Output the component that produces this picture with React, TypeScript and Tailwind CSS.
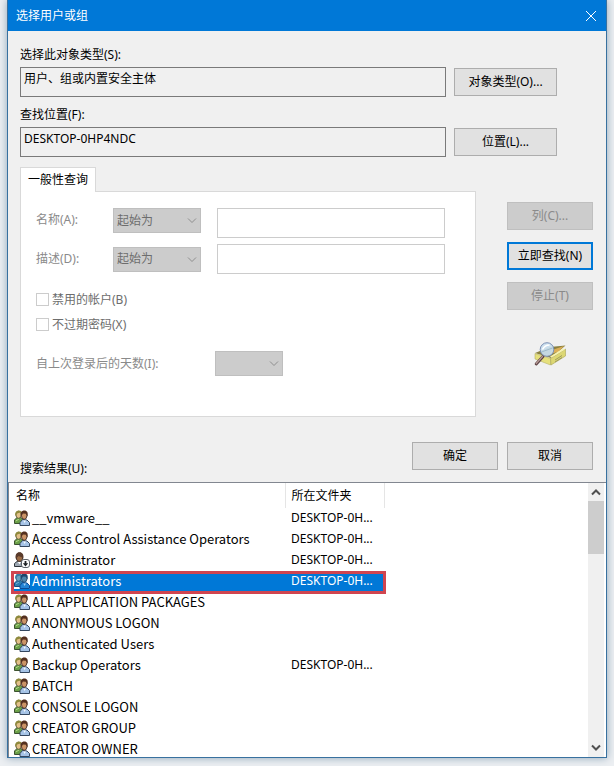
import { useId, type ReactNode } from "react";
import clsx from "clsx";

type Entry = { name: string; folder?: string; kind?: "user"; selected?: boolean };

const FOLDER = "DESKTOP-0H...";

const entries: Entry[] = [
  { name: "__vmware__", folder: FOLDER },
  { name: "Access Control Assistance Operators", folder: FOLDER },
  { name: "Administrator", folder: FOLDER, kind: "user" },
  { name: "Administrators", folder: FOLDER, selected: true },
  { name: "ALL APPLICATION PACKAGES" },
  { name: "ANONYMOUS LOGON" },
  { name: "Authenticated Users" },
  { name: "Backup Operators", folder: FOLDER },
  { name: "BATCH" },
  { name: "CONSOLE LOGON" },
  { name: "CREATOR GROUP" },
  { name: "CREATOR OWNER" },
];

function GroupIcon({ selected }: { selected?: boolean }) {
  return (
    <svg viewBox="0 0 16 16" className={clsx("size-4 shrink-0", selected && "bg-white")} aria-hidden="true">
      <path d="M0.5 13.500V10L3 7.500h4l2 2v4z" fill={selected ? "#2f7dae" : "#6a9f48"} stroke={selected ? "#164a80" : "#3c5230"} />
      <path d="M1.800 11l3.200-2" stroke={selected ? "#6fb0d8" : "#b5d888"} />
      <ellipse cx="4.600" cy="4.800" rx="2.700" ry="3.500" fill={selected ? "#6da3bf" : "#e2c088"} stroke={selected ? "#1f5277" : "#4c4830"} strokeWidth=".8" />
      <path d="M1.300 6C.6 2.500 2.300.4 5 .4c1.600 0 2.500.8 2.800 2L5.400 2.800 3.200 3.600z" fill={selected ? "#3a7ca3" : "#8f8a3c"} />
      <path d="M6 15.500V12.500l2.500-3 4.500.5 2.500 2.500v3H6z" fill={selected ? "#2584d4" : "#a5c3e6"} stroke={selected ? "#0f4a93" : "#34475f"} />
      <path d="M9.300 10.500l1.200 2.500 1.600-2.500z" fill={selected ? "#9fcdf3" : "#f2f7fd"} />
      <ellipse cx="10.200" cy="5.600" rx="2.700" ry="3.700" fill={selected ? "#4f86ab" : "#cc9466"} stroke={selected ? "#173f66" : "#35211a"} strokeWidth=".8" />
      <path d="M6.900 6.400C6 2.400 7.600.4 10.300.4c2.900 0 4.100 2.200 3.200 6.400l-1.400-3-3.400-.2z" fill={selected ? "#1b466e" : "#54301f"} />
    </svg>
  );
}

function DisabledUserIcon() {
  return (
    <svg viewBox="0 0 16 16" className="size-4 shrink-0" aria-hidden="true">
      <path d="M0.500 14.500V11.500L3 9.500h5l2 2v3z" fill="#9ea8b3" stroke="#2f353b" />
      <path d="M3.500 9.500l2 2.800 1.800-2.800z" fill="#fff" />
      <ellipse cx="5.500" cy="5.200" rx="3.200" ry="4.200" fill="#9a6a44" stroke="#33211a" strokeWidth=".9" />
      <path d="M1.800 6.800C1 2.600 2.600.3 5.500.3s4.600 2.300 3.700 6.500L7.600 5.200 4.600 4z" fill="#5a3b2b" />
      <rect x="7.500" y="7.500" width="8" height="8" rx="2.500" fill="#fff" stroke="#5c6167" />
      <path d="M11.500 9v3" stroke="#1f2225" strokeWidth="1.800" />
      <path d="M8.800 11.200h5.400l-2.700 3.200z" fill="#1f2225" />
    </svg>
  );
}

function SearchBoxIcon() {
  return (
    <svg viewBox="0 0 32 26" className="h-[26px] w-8" role="img" aria-label="查找">
      <path d="M1 11L16 5l15.500-1.500L17 16z" fill="#8a8040" />
      <path d="M18 8l12-4-6 6-8 2z" fill="#dcae55" />
      <path d="M1 11.500l15.500 5V23L1 17z" fill="#e6e07c" stroke="#b5b065" strokeWidth=".6" />
      <path d="M16.500 16.500L31.500 7v7L17 23z" fill="#dcd773" stroke="#aaa458" strokeWidth=".6" />
      <path d="M17.500 15.500l13.500-8-2-1-13 8z" fill="#f7f3ae" />
      <path d="M21 18l7-4.500M21 20l7-4.500" stroke="#8f8d55" strokeWidth=".8" />
      <path d="M9 14.500L2.200 22" stroke="#5e4345" strokeWidth="3" strokeLinecap="round" />
      <path d="M8.500 14.500L2.200 21.500" stroke="#b79a95" strokeWidth="1.200" strokeLinecap="round" />
      <circle cx="13" cy="7.500" r="6.800" fill="#c9dfee" fillOpacity=".93" stroke="#7c90b4" />
      <path d="M8.500 7.500C10 4.500 12 3 15.500 3" fill="none" stroke="#fff" strokeWidth="1.600" />
      <path d="M7.500 10l11-4" stroke="#93b2c6" strokeWidth=".8" />
    </svg>
  );
}

function Chevron({ up, className }: { up?: boolean; className?: string }) {
  return (
    <svg viewBox="0 0 10 10" className={clsx("size-[10px]", className)} fill="none" stroke="currentColor" aria-hidden="true">
      <path d={up ? "M1 7.500L5 3.500 9 7.500" : "M1 2.500L5 6.500 9 2.500"} />
    </svg>
  );
}

function PushButton({ children, className, disabled }: { children: ReactNode; className?: string; disabled?: boolean }) {
  return (
    <button
      type="button"
      disabled={disabled}
      className={clsx(
        "h-7 shrink-0 border text-center",
        disabled ? "border-[#bfbfbf] bg-[#cccccc] text-[#8a8a8a]" : "border-[#adadad] bg-[#e1e1e1]",
        className,
      )}
    >
      {children}
    </button>
  );
}

function LocationRow({ label, value, button }: { label: string; value: string; button: string }) {
  const id = useId();
  return (
    <div>
      <label htmlFor={id} className="block h-5 leading-4">{label}</label>
      <div className="flex items-center gap-2 pr-9">
        <input id={id} readOnly value={value} className="h-[30px] min-w-0 flex-1 border border-[#7a7a7a] bg-[#f0f0f0] px-[3px] pb-2 outline-none" />
        <PushButton className="w-[103px]">{button}</PushButton>
      </div>
    </div>
  );
}

function DropDown({ id, label, value, className }: { id?: string; label?: string; value: string; className: string }) {
  return (
    <div className={clsx("relative h-[25px] shrink-0", className)}>
      <select id={id} aria-label={label} disabled className="h-full w-full appearance-none border border-[#bfbfbf] bg-[#cccccc] pl-[3px] text-[#6d6d6d] opacity-100">
        <option>{value}</option>
      </select>
      <Chevron className="pointer-events-none absolute top-2 right-1 text-[#8f8f8f]" />
    </div>
  );
}

function QueryRow({ label, top }: { label: string; top?: boolean }) {
  const id = useId();
  return (
    <div className={clsx("flex", top ? "items-start" : "items-center")}>
      <label htmlFor={id} className="w-[77px] shrink-0 leading-6 text-[#8a8a8a]">{label}</label>
      <DropDown label={label} value="起始为" className="w-[88px]" />
      <input id={id} disabled className="ml-4 h-[30px] min-w-0 flex-1 border border-[#cccccc] bg-white" />
    </div>
  );
}

function Check({ label }: { label: string }) {
  return (
    <label className="flex h-[25px] items-center gap-[3px] text-[#6d6d6d]">
      <input type="checkbox" disabled className="size-[13px] appearance-none border border-[#cccccc] bg-white" />
      {label}
    </label>
  );
}

export default function App() {
  const daysId = useId();
  return (
    <div className="h-screen overflow-hidden bg-[#eceff2] px-[7px] pb-2 font-['Noto_Sans','Noto_Sans_CJK_SC',sans-serif] text-[12px] text-black">
      <main className="flex h-full flex-col border-x border-b border-[#38719f] bg-[#f0f0f0] shadow-[0_0_8px_#8da5b8]">
        <header className="flex h-[31px] shrink-0 items-center justify-between bg-[#0078d7] pr-[10px] pl-2 text-white">
          <h1>选择用户或组</h1>
          <button type="button" aria-label="关闭">
            <svg viewBox="0 0 10 10" className="size-[10px]" stroke="currentColor" aria-hidden="true">
              <path d="M0 0l10 10M10 0L0 10" />
            </svg>
          </button>
        </header>

        <div className="flex shrink-0 flex-col pt-4 pr-[13px] pl-3">
          <div className="flex flex-col gap-[10px]">
            <LocationRow label="选择此对象类型(S):" value="用户、组或内置安全主体" button="对象类型(O)..." />
            <LocationRow label="查找位置(F):" value="DESKTOP-0HP4NDC" button="位置(L)..." />
          </div>

          <div className="mt-[10px] flex items-start gap-[31px]">
            <section className="min-w-0 flex-1">
              <div role="tablist" className="flex">
                <button type="button" role="tab" aria-selected="true" className="relative z-10 -mb-px h-[25px] w-[76px] border border-b-0 border-[#d9d9d9] bg-white text-center">
                  一般性查询
                </button>
              </div>
              <div role="tabpanel" className="border border-[#d9d9d9] bg-white pt-4 pr-[30px] pb-10 pl-[15px]">
                <div className="flex flex-col gap-[6px]">
                  <QueryRow label="名称(A):" top />
                  <QueryRow label="描述(D):" />
                </div>
                <div className="mt-[13px]">
                  <Check label="禁用的帐户(B)" />
                  <Check label="不过期密码(X)" />
                </div>
                <div className="mt-[14px] flex items-center">
                  <label htmlFor={daysId} className="w-[179px] text-[#8a8a8a]">自上次登录后的天数(I):</label>
                  <DropDown id={daysId} value="" className="w-[68px]" />
                </div>
              </div>
            </section>
            <div className="flex w-[86px] shrink-0 flex-col gap-3 pt-[35px]">
              <PushButton disabled>列(C)...</PushButton>
              <button type="button" className="h-7 border-2 border-[#0078d7] bg-[#e1e1e1] text-center">立即查找(N)</button>
              <PushButton disabled>停止(T)</PushButton>
              <div className="mt-5 flex justify-center"><SearchBoxIcon /></div>
            </div>
          </div>

          <div className="mt-[25px] flex h-10 items-start justify-between">
            <h2 id="results" className="self-end pb-1">搜索结果(U):</h2>
            <div className="flex gap-[9px]">
              <PushButton className="w-[86px]">确定</PushButton>
              <PushButton className="w-[86px]">取消</PushButton>
            </div>
          </div>
        </div>

        <div className="flex min-h-0 flex-1 border-t border-l border-[#828790] bg-white pr-[2px]">
          <div className="min-w-0 flex-1 overflow-hidden">
            <table aria-labelledby="results" className="w-[376px] table-fixed border-collapse text-left">
              <thead>
                <tr className="h-[25px]">
                  <th className="w-[276px] border-r border-[#e5e5e5] p-0 pl-[7px] font-normal">名称</th>
                  <th className="border-r border-[#e5e5e5] p-0 pl-[6px] font-normal">所在文件夹</th>
                </tr>
              </thead>
              <tbody>
                {entries.map((entry) => (
                  <tr key={entry.name} className={clsx("h-[21px] leading-4", entry.selected && "bg-[#0078d7] text-white")}>
                    <td className={clsx("relative p-0 pt-[2px] align-top", entry.selected && "bg-linear-to-r from-white from-[5px] to-[#0078d7] to-[5px]")}>
                      <div className="flex items-center gap-[2px] pl-[5px] font-['Noto_Sans_CJK_SC',sans-serif] text-[13px] whitespace-nowrap">
                        {entry.kind === "user" ? <DisabledUserIcon /> : <GroupIcon selected={entry.selected} />}
                        {entry.name}
                      </div>
                      {entry.selected && (
                        <span className="pointer-events-none absolute top-0 left-[2px] z-10 h-[23px] w-[375px] border-3 border-[#d04550]" />
                      )}
                    </td>
                    <td className="p-0 pt-[2px] pl-[6px] align-top whitespace-nowrap">{entry.folder}</td>
                  </tr>
                ))}
              </tbody>
            </table>
          </div>
          <div className="flex w-4 shrink-0 flex-col bg-[#f0f0f0] text-[#505050]">
            <button type="button" aria-label="向上滚动" className="flex h-[18px] items-center justify-center">
              <Chevron up className="stroke-2" />
            </button>
            <div className="h-[53px] bg-[#cdcdcd]" />
            <button type="button" aria-label="向下滚动" className="mt-auto flex h-[18px] items-center justify-center">
              <Chevron className="stroke-2" />
            </button>
          </div>
        </div>
      </main>
    </div>
  );
}
